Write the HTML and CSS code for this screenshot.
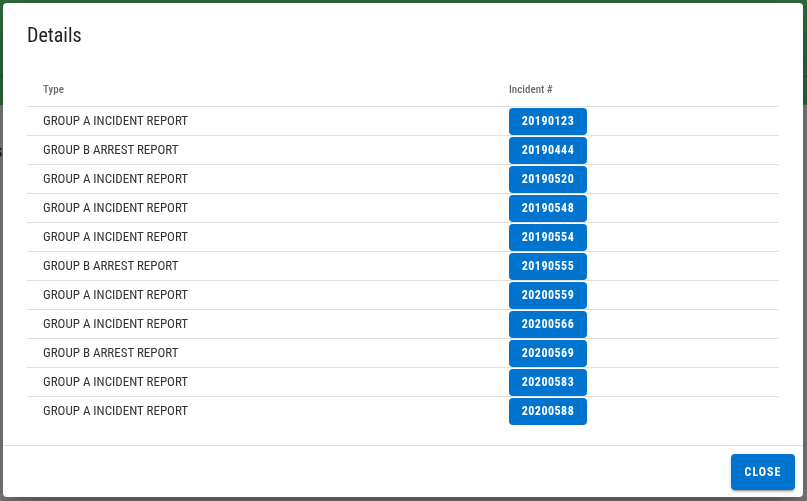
FILE: index.html
```
<!DOCTYPE html>
<html>
<head>
<meta charset="utf-8">
<link rel="stylesheet" href="styles.css">
</head>
<body>
<div class="page">
  <div class="appbar"><div class="appbar-line"></div></div>
  <div class="page-body"><span class="page-letter">s</span></div>
</div>
<div class="backdrop">
  <div class="dialog">
    <div class="dialog-title">Details</div>
    <div class="dialog-content">
      <table class="table">
        <thead>
          <tr><th class="col-type">Type</th><th class="col-inc">Incident #</th></tr>
        </thead>
        <tbody>
          <tr><td>GROUP A INCIDENT REPORT</td><td class="cell-btn"><button class="inc-btn">20190123</button></td></tr>
          <tr><td>GROUP B ARREST REPORT</td><td class="cell-btn"><button class="inc-btn">20190444</button></td></tr>
          <tr><td>GROUP A INCIDENT REPORT</td><td class="cell-btn"><button class="inc-btn">20190520</button></td></tr>
          <tr><td>GROUP A INCIDENT REPORT</td><td class="cell-btn"><button class="inc-btn">20190548</button></td></tr>
          <tr><td>GROUP A INCIDENT REPORT</td><td class="cell-btn"><button class="inc-btn">20190554</button></td></tr>
          <tr><td>GROUP B ARREST REPORT</td><td class="cell-btn"><button class="inc-btn">20190555</button></td></tr>
          <tr><td>GROUP A INCIDENT REPORT</td><td class="cell-btn"><button class="inc-btn">20200559</button></td></tr>
          <tr><td>GROUP A INCIDENT REPORT</td><td class="cell-btn"><button class="inc-btn">20200566</button></td></tr>
          <tr><td>GROUP B ARREST REPORT</td><td class="cell-btn"><button class="inc-btn">20200569</button></td></tr>
          <tr><td>GROUP A INCIDENT REPORT</td><td class="cell-btn"><button class="inc-btn">20200583</button></td></tr>
          <tr class="last"><td>GROUP A INCIDENT REPORT</td><td class="cell-btn"><button class="inc-btn">20200588</button></td></tr>
        </tbody>
      </table>
    </div>
    <div class="dialog-actions">
      <button class="close-btn">CLOSE</button>
    </div>
  </div>
</div>
</body>
</html>
```
FILE: styles.css
```
* { box-sizing: border-box; }
html, body { margin: 0; padding: 0; }
body {
  width: 807px;
  height: 501px;
  overflow: hidden;
  font-family: Roboto, "Liberation Sans", sans-serif;
  font-stretch: 80%;
  background: #7f7f7f;
}
button { font-stretch: 80%; }
.page { width: 807px; height: 501px; }
.appbar {
  height: 105px;
  background: #2d6a3c;
  padding-top: 76px;
}
.appbar-line { height: 1px; background: #24552f; }
.page-body { padding-top: 36px; }
.page-letter {
  display: block;
  margin-left: -6px;
  font-size: 18px;
  font-weight: 700;
  color: #1c1c1c;
  line-height: 20px;
}
.backdrop {
  position: fixed;
  inset: 0;
  padding: 3px 4px 4px 3px;
  display: flex;
}
.dialog {
  width: 800px;
  height: 494px;
  background: #fff;
  border-radius: 4px;
  box-shadow: 0 11px 15px -7px rgba(0,0,0,0.2), 0 24px 38px 3px rgba(0,0,0,0.14), 0 9px 46px 8px rgba(0,0,0,0.12);
  display: flex;
  flex-direction: column;
}
.dialog-title {
  padding: 16px 24px;
  font-size: 20px;
  line-height: 32px;
  font-weight: 400;
  color: #212121;
}
.dialog-content {
  flex: 1;
  padding: 6px 24px 20px;
  border-bottom: 1px solid #e0e0e0;
}
.table {
  width: 752px;
  border-collapse: collapse;
  table-layout: fixed;
}
.col-type { width: 466px; }
th {
  height: 33px;
  padding: 0 16px;
  text-align: left;
  font-size: 11px;
  font-weight: 500;
  color: #6b6b6b;
  border-bottom: 1px solid #e0e0e0;
  vertical-align: middle;
}
td {
  height: 29px;
  padding: 0 16px;
  font-size: 13px;
  color: #333;
  border-bottom: 1px solid #e0e0e0;
  vertical-align: middle;
}
tr.last td { border-bottom: none; }
td.cell-btn { vertical-align: top; padding-top: 1px; }
.inc-btn {
  display: block;
  width: 78px;
  height: 27px;
  border: none;
  border-radius: 4px;
  background: #0074cf;
  color: #fff;
  font-family: Roboto, "Liberation Sans", sans-serif;
  font-size: 12px;
  font-weight: 700;
  letter-spacing: 0.5px;
  padding: 0;
}
.dialog-actions {
  height: 51px;
  padding: 8px;
  display: flex;
  justify-content: flex-end;
  align-items: flex-start;
}
.close-btn {
  width: 64px;
  height: 36px;
  border: none;
  border-radius: 4px;
  background: #0074cf;
  color: #fff;
  font-family: Roboto, "Liberation Sans", sans-serif;
  font-size: 12px;
  font-weight: 700;
  letter-spacing: 1px;
  box-shadow: 0 3px 1px -2px rgba(0,0,0,0.2), 0 2px 2px 0 rgba(0,0,0,0.14), 0 1px 5px 0 rgba(0,0,0,0.12);
}
```
